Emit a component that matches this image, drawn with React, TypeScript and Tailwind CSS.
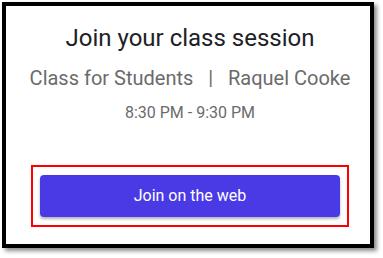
export default function App() {
  return (
    <div className="w-[383px] h-[258px] bg-white pt-[2px] pl-[2px]" style={{ fontFamily: 'Roboto, "Liberation Sans", sans-serif' }}>
      <div className="w-[372px] h-[246px] border-4 border-black bg-white shadow-[3px_3px_4px_rgba(0,0,0,0.45)] pl-[4px] pt-[18px] flex flex-col items-center">
        <h1 className="text-[24px] leading-[28px] text-[#202124]">Join your class session</h1>
        <p className="mt-[12px] text-[20px] leading-[28px] text-[#6b6b6b]">
          Class for Students&nbsp;&nbsp;&nbsp;|&nbsp;&nbsp;&nbsp;Raquel Cooke
        </p>
        <p className="mt-[9px] text-[16px] leading-[24px] text-[#6b6b6b]">8:30 PM - 9:30 PM</p>
        <div className="mt-[40px] border-2 border-[#ff0000] px-[7px] py-[8px]">
          <button className="w-[300px] h-[42px] rounded-[4px] bg-[#4a3ae6] text-white text-[16px] font-normal shadow-[0_2px_3px_rgba(0,0,0,0.3)]">
            Join on the web
          </button>
        </div>
      </div>
    </div>
  );
}
